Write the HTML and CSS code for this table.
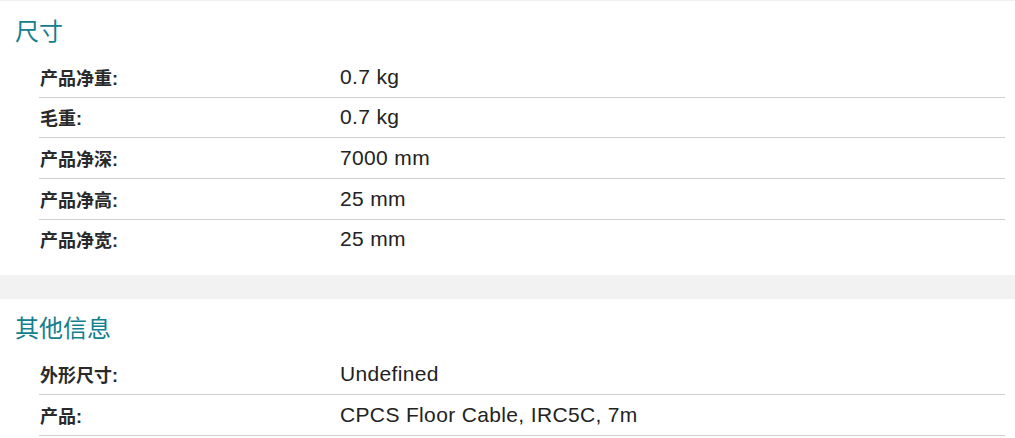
FILE: index.html
```html
<!DOCTYPE html>
<html lang="zh-CN">
<head>
<meta charset="utf-8">
<title>规格</title>
<link rel="stylesheet" href="styles.css">
</head>
<body>
<div class="page">
  <section class="spec spec--first">
    <h2 class="spec-title">尺寸</h2>
    <dl class="rows">
      <div class="row"><dt>产品净重:</dt><dd>0.7 kg</dd></div>
      <div class="row"><dt>毛重:</dt><dd>0.7 kg</dd></div>
      <div class="row"><dt>产品净深:</dt><dd>7000 mm</dd></div>
      <div class="row"><dt>产品净高:</dt><dd>25 mm</dd></div>
      <div class="row row--last"><dt>产品净宽:</dt><dd>25 mm</dd></div>
    </dl>
  </section>
  <div class="band"></div>
  <section class="spec spec--next">
    <h2 class="spec-title">其他信息</h2>
    <dl class="rows">
      <div class="row"><dt>外形尺寸:</dt><dd>Undefined</dd></div>
      <div class="row"><dt>产品:</dt><dd>CPCS Floor Cable, IRC5C, 7m</dd></div>
    </dl>
  </section>
</div>
</body>
</html>
```
FILE: styles.css
```css
html, body {
  margin: 0;
  padding: 0;
  background: #fff;
}
.page {
  border-top: 1px solid #f2f2f2;
  font-family: "Liberation Sans", "Noto Sans CJK SC", sans-serif;
  color: #222;
}
.spec {
  padding: 14px 10px 16px 0;
}
.spec--next {
  padding-top: 13px;
}
.spec-title {
  margin: 0 0 12px 15px;
  font-family: "Noto Sans CJK SC", "Liberation Sans", sans-serif;
  font-weight: 400;
  font-size: 24px;
  line-height: 30px;
  color: #13808d;
}
.rows {
  margin: 0 0 0 39px;
  padding: 0;
}
.row {
  display: flex;
  align-items: center;
  height: 39.67px;
  border-bottom: 1px solid #cfcfcf;
}
.row--last {
  border-bottom: none;
}
.row dt {
  width: 300px;
  padding-left: 1px;
  font-family: "Liberation Sans", "Noto Sans CJK SC", sans-serif;
  font-weight: 700;
  font-size: 18px;
  color: #2a2a2a;
}
.row dd {
  margin: 0;
  font-size: 21px;
  letter-spacing: 0.35px;
  color: #222;
}
.band {
  height: 24px;
  background: #f2f2f2;
}
```
